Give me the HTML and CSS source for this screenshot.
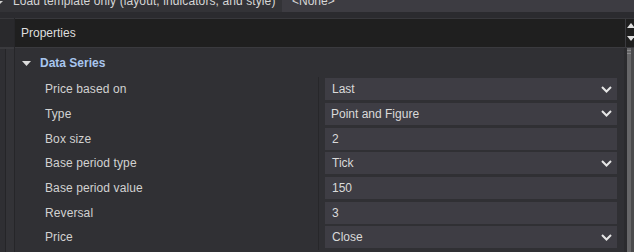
FILE: index.html
```html
<!DOCTYPE html>
<html lang="en">
<head>
    <meta charset="UTF-8">
    <title>Properties</title>
    <link rel="stylesheet" href="styles.css">
</head>
<body>
    <div class="template-row">
        <span class="corner-mark"></span>
        <span class="template-label">Load template only (layout, indicators, and style)</span>
        <div class="template-select">
            <span>&lt;None&gt;</span>
            <svg class="chev" width="9" height="6" viewBox="0 0 9 6"><path d="M1 1 L4.5 4.5 L8 1" fill="none" stroke="#e6e6e6" stroke-width="2"/></svg>
        </div>
    </div>
    <div class="band"></div>
    <div class="main">
        <div class="side">
            <div class="side-top"></div>
            <div class="side-strip"></div>
        </div>
        <div class="panel">
            <div class="panel-head">
                <span class="panel-title">Properties</span>
                <div class="spin">
                    <svg width="8" height="5" viewBox="0 0 8 5"><path d="M0 5 L4 0 L8 5 Z" fill="#e0e0e0"/></svg>
                    <svg width="8" height="5" viewBox="0 0 8 5"><path d="M0 0 L4 5 L8 0 Z" fill="#e0e0e0"/></svg>
                </div>
            </div>
            <div class="panel-body">
                <div class="grid">
                    <div class="category">
                        <svg class="caret" width="9" height="5" viewBox="0 0 9 5"><path d="M0 0 L9 0 L4.5 5 Z" fill="#dcdcdc"/></svg>
                        <span>Data Series</span>
                    </div>
                    <div class="prop">
                        <div class="prop-name">Price based on</div>
                        <div class="prop-value"><div class="field select"><span>Last</span><svg class="chev" width="11" height="7" viewBox="0 0 11 7"><path d="M1 1 L5.5 5.5 L10 1" fill="none" stroke="#e6e6e6" stroke-width="2"/></svg></div></div>
                    </div>
                    <div class="prop">
                        <div class="prop-name">Type</div>
                        <div class="prop-value"><div class="field select tight"><span>Point and Figure</span><svg class="chev" width="11" height="7" viewBox="0 0 11 7"><path d="M1 1 L5.5 5.5 L10 1" fill="none" stroke="#e6e6e6" stroke-width="2"/></svg></div></div>
                    </div>
                    <div class="prop">
                        <div class="prop-name">Box size</div>
                        <div class="prop-value"><div class="field"><span>2</span></div></div>
                    </div>
                    <div class="prop">
                        <div class="prop-name">Base period type</div>
                        <div class="prop-value"><div class="field select"><span>Tick</span><svg class="chev" width="11" height="7" viewBox="0 0 11 7"><path d="M1 1 L5.5 5.5 L10 1" fill="none" stroke="#e6e6e6" stroke-width="2"/></svg></div></div>
                    </div>
                    <div class="prop">
                        <div class="prop-name">Base period value</div>
                        <div class="prop-value"><div class="field"><span>150</span></div></div>
                    </div>
                    <div class="prop">
                        <div class="prop-name">Reversal</div>
                        <div class="prop-value"><div class="field"><span>3</span></div></div>
                    </div>
                    <div class="prop">
                        <div class="prop-name">Price</div>
                        <div class="prop-value"><div class="field select"><span>Close</span><svg class="chev" width="11" height="7" viewBox="0 0 11 7"><path d="M1 1 L5.5 5.5 L10 1" fill="none" stroke="#e6e6e6" stroke-width="2"/></svg></div></div>
                    </div>
                </div>
                <div class="scrollbar">
                    <div class="thumb">
                        <div class="grip"></div>
                        <div class="grip"></div>
                    </div>
                </div>
            </div>
        </div>
    </div>
</body>
</html>
```

FILE: styles.css
```css
body {
    margin: 0;
    padding: 0;
    width: 634px;
    height: 252px;
    overflow: hidden;
    background-color: #333337;
    color: #d4d4d4;
    font-family: 'Liberation Sans', Arial, sans-serif;
    font-size: 12px;
}

/* Template row, cut at the top of the window */
.template-row {
    display: flex;
    align-items: center;
    height: 22px;
    margin-top: -10px;
}
.corner-mark {
    width: 0;
    height: 0;
    margin-top: 2px;
    border-left: 3px solid transparent;
    border-right: 3px solid transparent;
    border-top: 3px solid #cfcfcf;
    margin-left: -3px;
    margin-right: 10px;
}
.template-label {
    width: 269px;
    color: #d6d6d6;
    letter-spacing: 0.1px;
}
.template-select {
    flex: 1;
    height: 22px;
    display: flex;
    align-items: center;
    justify-content: space-between;
    padding: 0 1px 0 10px;
    background-color: #3d3c42;
    color: #d6d6d6;
}
.template-select .chev {
    margin-top: -14px;
}

.band {
    height: 6px;
    background-color: #2b2b2f;
}

.main {
    display: flex;
    height: 234px;
}

/* Left docked column */
.side {
    width: 14px;
    display: flex;
    flex-direction: column;
    border-right: 1px solid #262629;
}
.side-top {
    height: 28px;
    background-color: #29292c;
    border-top: 1px solid #38383c;
    border-bottom: 2px solid #3a3a3e;
}
.side-strip {
    flex: 1;
    width: 5px;
    border-right: 1px solid #252528;
    background-color: #2f2f33;
}

/* Properties panel */
.panel {
    flex: 1;
    display: flex;
    flex-direction: column;
}
.panel-head {
    height: 28px;
    display: flex;
    align-items: center;
    justify-content: space-between;
    background-color: #1f1f1f;
    border-top: 1px solid #38383c;
    border-bottom: 1px solid #3a3a3e;
}
.panel-title {
    padding-left: 6px;
    color: #dedede;
}
.spin {
    width: 9px;
    height: 100%;
    display: flex;
    flex-direction: column;
    justify-content: space-between;
    align-items: center;
    padding: 4px 0 6px 1px;
    box-sizing: border-box;
    border-left: 1px solid #3a3a3e;
}

.panel-body {
    flex: 1;
    display: flex;
    background-color: #303034;
}
.grid {
    flex: 1;
}
.category {
    height: 29px;
    display: flex;
    align-items: center;
    font-weight: bold;
    color: #a8c6ee;
}
.caret {
    margin: 1px 9px 0 7px;
}
.prop {
    display: flex;
    height: 24.67px;
}
.prop-name {
    width: 273px;
    padding-left: 30px;
    display: flex;
    align-items: center;
    border-right: 1px solid #27272a;
    color: #d2d2d2;
    letter-spacing: 0.1px;
}
.prop-value {
    flex: 1;
    display: flex;
    align-items: center;
    padding: 0 7px 0 6px;
}
.field {
    flex: 1;
    height: 22px;
    display: flex;
    align-items: center;
    justify-content: space-between;
    padding: 0 5px 0 7px;
    background-color: #3e3d44;
    color: #dadada;
}
.field.tight {
    padding-left: 6px;
}

/* Scrollbar */
.scrollbar {
    width: 10px;
    display: flex;
    background-color: #2b2b2e;
}
.thumb {
    width: 4px;
    margin-left: 3px;
    background-color: #666668;
    border-right: 3px solid #4a4a4c;
    padding-top: 2px;
}
.grip {
    height: 1px;
    margin-bottom: 2px;
    background-color: #8a8a8c;
}
```
